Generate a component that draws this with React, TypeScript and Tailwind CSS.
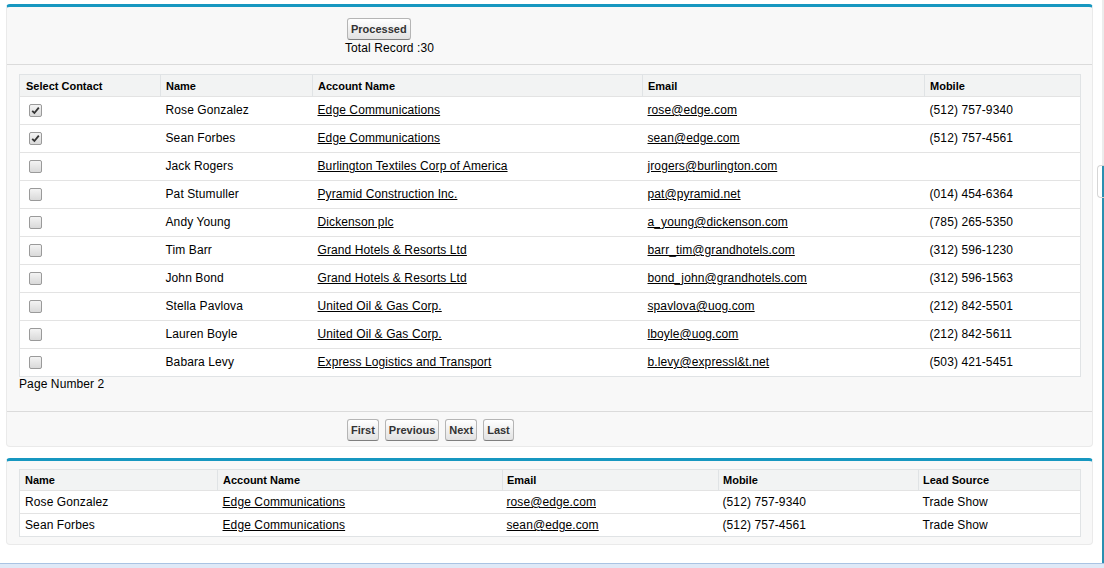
import React from "react";

type Contact = {
  checked: boolean;
  name: string;
  account: string;
  email: string;
  mobile: string;
};

const contacts: Contact[] = [
  { checked: true, name: "Rose Gonzalez", account: "Edge Communications", email: "rose@edge.com", mobile: "(512) 757-9340" },
  { checked: true, name: "Sean Forbes", account: "Edge Communications", email: "sean@edge.com", mobile: "(512) 757-4561" },
  { checked: false, name: "Jack Rogers", account: "Burlington Textiles Corp of America", email: "jrogers@burlington.com", mobile: "" },
  { checked: false, name: "Pat Stumuller", account: "Pyramid Construction Inc.", email: "pat@pyramid.net", mobile: "(014) 454-6364" },
  { checked: false, name: "Andy Young", account: "Dickenson plc", email: "a_young@dickenson.com", mobile: "(785) 265-5350" },
  { checked: false, name: "Tim Barr", account: "Grand Hotels & Resorts Ltd", email: "barr_tim@grandhotels.com", mobile: "(312) 596-1230" },
  { checked: false, name: "John Bond", account: "Grand Hotels & Resorts Ltd", email: "bond_john@grandhotels.com", mobile: "(312) 596-1563" },
  { checked: false, name: "Stella Pavlova", account: "United Oil & Gas Corp.", email: "spavlova@uog.com", mobile: "(212) 842-5501" },
  { checked: false, name: "Lauren Boyle", account: "United Oil & Gas Corp.", email: "lboyle@uog.com", mobile: "(212) 842-5611" },
  { checked: false, name: "Babara Levy", account: "Express Logistics and Transport", email: "b.levy@expressl&t.net", mobile: "(503) 421-5451" },
];

const selected = contacts.filter((c) => c.checked);

function Btn({ label }: { label: string }) {
  return (
    <button className="rounded-[3px] border border-[#b5b5b5] border-b-[#7f7f7f] bg-linear-to-b from-white to-[#e2e2e2] px-[3px] py-[3px] text-[11px] font-bold leading-[14px] text-[#333]">
      {label}
    </button>
  );
}

function Check({ on }: { on: boolean }) {
  return (
    <span className="ml-[3px] flex h-[13px] w-[13px] items-center justify-center rounded-[2px] border border-[#9a9a9a] bg-linear-to-b from-[#f4f4f4] to-[#d9d9d9]">
      {on && (
        <svg width="9" height="9" viewBox="0 0 9 9">
          <path d="M1.2 4.8 L3.4 7 L7.8 1.6" fill="none" stroke="#333" strokeWidth="1.8" />
        </svg>
      )}
    </span>
  );
}

const th = "border-r border-[#e0e3e5] pt-[1px] text-left text-[11px] font-bold text-black";
const link = "text-black underline";

export default function App() {
  return (
    <div className="flex h-[568px] w-[1104px] flex-col overflow-hidden bg-white font-['Liberation_Sans',Arial,sans-serif] text-[12px] text-black">
      <div className="flex flex-1">
        <div className="w-[1097px] pl-[6px] pt-[4px]">
          {/* selection block */}
          <div className="w-[1087px] rounded-[4px] border border-t-[3px] border-[#eaeaea] border-t-[#1797c0] bg-[#f8f8f8]">
            <div className="border-b border-[#dbdbdb] pb-[9px] pl-[338px] pt-[11px]">
              <div className="ml-[2px]">
                <Btn label="Processed" />
              </div>
              <div className="pt-[1px] leading-[14px] tracking-[0.1px]">Total Record :30</div>
            </div>
            <div className="px-[12px] pt-[9px]">
              <table className="w-[1061px] table-fixed border-collapse border border-[#e0e3e5] bg-white">
                <colgroup>
                  <col className="w-[141px]" />
                  <col className="w-[152px]" />
                  <col className="w-[330px]" />
                  <col className="w-[282px]" />
                  <col className="w-[156px]" />
                </colgroup>
                <thead>
                  <tr className="h-[22px] bg-[#f2f3f3]">
                    <th className={`${th} px-[6px]`}>Select Contact</th>
                    <th className={`${th} px-[5px]`}>Name</th>
                    <th className={`${th} px-[5px]`}>Account Name</th>
                    <th className={`${th} px-[5px]`}>Email</th>
                    <th className={`${th} px-[5px]`}>Mobile</th>
                  </tr>
                </thead>
                <tbody className="tracking-[0.1px]">
                  {contacts.map((c) => (
                    <tr key={c.name} className="h-[28px] border-t border-[#e3e3e3]">
                      <td className="px-[6px]">
                        <Check on={c.checked} />
                      </td>
                      <td className="px-[5px] pb-[1px]">{c.name}</td>
                      <td className="px-[5px] pb-[1px]">
                        <a className={link}>{c.account}</a>
                      </td>
                      <td className="px-[5px] pb-[1px]">
                        <a className={link}>{c.email}</a>
                      </td>
                      <td className="px-[5px] pb-[1px]">{c.mobile}</td>
                    </tr>
                  ))}
                </tbody>
              </table>
              <div className="pb-[20px] leading-[14px] tracking-[0.1px]">Page Number 2</div>
            </div>
            <div className="flex gap-[6px] border-t border-[#dbdbdb] pb-[5px] pl-[340px] pt-[7px]">
              <Btn label="First" />
              <Btn label="Previous" />
              <Btn label="Next" />
              <Btn label="Last" />
            </div>
          </div>

          {/* selected contacts block */}
          <div className="mt-[11px] w-[1087px] rounded-[4px] border border-t-[3px] border-[#eaeaea] border-t-[#1797c0] bg-[#f8f8f8] px-[12px] pb-[7px] pt-[8px]">
            <table className="w-[1061px] table-fixed border-collapse border border-[#e0e3e5] bg-white">
              <colgroup>
                <col className="w-[198px]" />
                <col className="w-[285px]" />
                <col className="w-[216px]" />
                <col className="w-[200px]" />
                <col className="w-[162px]" />
              </colgroup>
              <thead>
                <tr className="h-[21px] bg-[#f2f3f3]">
                  <th className={`${th} px-[5px]`}>Name</th>
                  <th className={`${th} px-[5px]`}>Account Name</th>
                  <th className={`${th} px-[4px]`}>Email</th>
                  <th className={`${th} px-[4px]`}>Mobile</th>
                  <th className={`${th} px-[4px]`}>Lead Source</th>
                </tr>
              </thead>
              <tbody className="tracking-[0.1px]">
                {selected.map((c) => (
                  <tr key={c.name} className="h-[23px] border-t border-[#e3e3e3]">
                    <td className="px-[5px]">{c.name}</td>
                    <td className="px-[5px]">
                      <a className={link}>{c.account}</a>
                    </td>
                    <td className="px-[4px]">
                      <a className={link}>{c.email}</a>
                    </td>
                    <td className="px-[4px]">{c.mobile}</td>
                    <td className="px-[4px]">Trade Show</td>
                  </tr>
                ))}
              </tbody>
            </table>
          </div>
        </div>

        {/* sidebar handle strip */}
        <div className="flex w-[7px] flex-col items-end">
          <div className="h-[165px] w-[2px] bg-[#ececec]" />
          <div className="flex h-[33px] w-[7px] justify-end rounded-l-[4px] border border-r-0 border-[#d6d6d6] bg-white">
            <div className="w-[2px] bg-[#2a8fb0]" />
          </div>
          <div className="w-[2px] flex-1 bg-[#2a8fb0]" />
        </div>
      </div>
      <div className="h-[5px] border-t border-[#a9c3e3] bg-[#dfe9f7]" />
    </div>
  );
}
